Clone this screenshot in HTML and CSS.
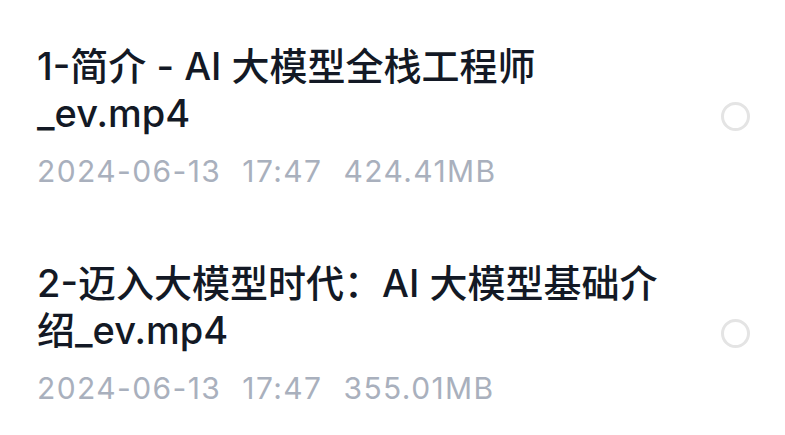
FILE: index.html
```html
<!DOCTYPE html>
<html>
 <head>
  <meta charset="utf-8">
  <title>文件列表</title>
  <link rel="stylesheet" href="styles.css">
 </head>
 <body>
  <div class="filelist">
   <div class="fileitem">
    <div class="fileinfo">
     <div class="filename">1-简介 - AI 大模型全栈工程师_ev.mp4</div>
     <div class="filemeta"><span>2024-06-13</span><span>17:47</span><span>424.41MB</span></div>
    </div>
    <span class="radio"></span>
   </div>
   <div class="fileitem">
    <div class="fileinfo">
     <div class="filename">2-迈入大模型时代：AI 大模型基础介绍_ev.mp4</div>
     <div class="filemeta"><span>2024-06-13</span><span>17:47</span><span>355.01MB</span></div>
    </div>
    <span class="radio"></span>
   </div>
  </div>
 </body>
</html>
```

FILE: styles.css
```css
body {
    margin: 0;
    background: #ffffff;
    font-family: Inter, "Noto Sans CJK SC", sans-serif;
}
.filelist {
    padding: 8px 35px 0 37px;
}
.fileitem {
    display: flex;
    align-items: center;
    padding: 35px 0 36px;
}
.fileinfo {
    flex: 1;
    padding-right: 52px;
}
.filename {
    font-size: 38px;
    font-weight: 500;
    line-height: 47px;
    color: #131925;
}
.filemeta {
    margin-top: 16px;
    font-size: 30px;
    line-height: 36px;
    letter-spacing: 1.4px;
    color: #a9b0bd;
}
.filemeta span {
    margin-right: 21px;
}
.radio {
    width: 23px;
    height: 23px;
    border: 3px solid #e4e4e4;
    border-radius: 50%;
}
```
